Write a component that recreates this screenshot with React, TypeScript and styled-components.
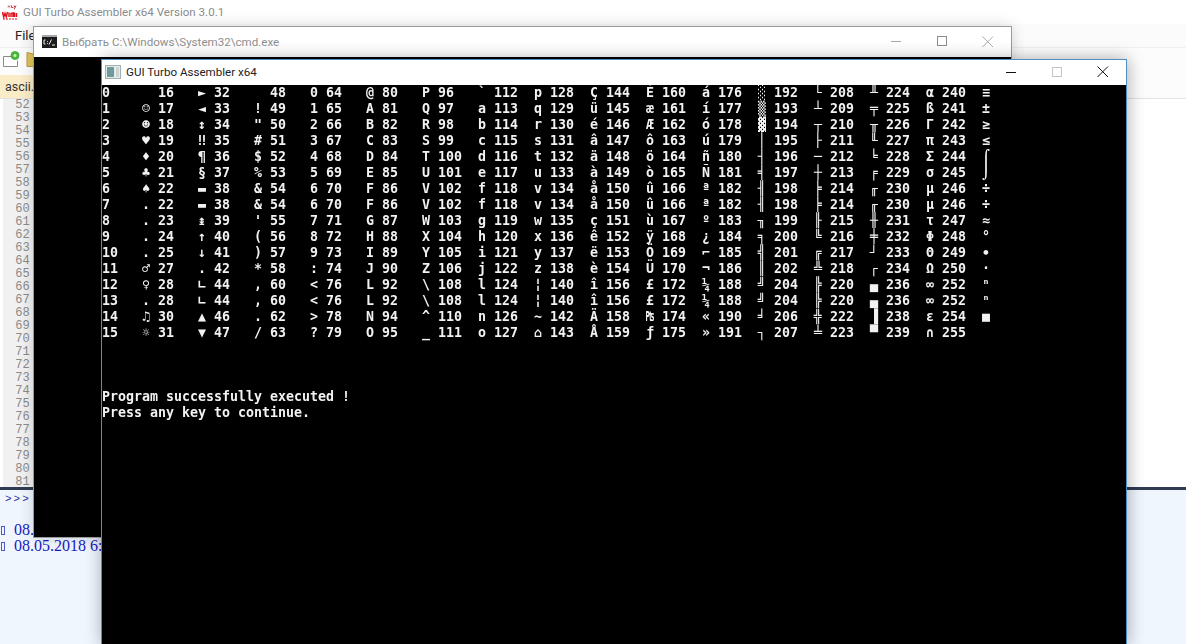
import React from 'react';
import styled, { createGlobalStyle } from 'styled-components';

const GlobalStyle = createGlobalStyle`
  html, body {
    margin: 0;
    padding: 0;
    background: #fff;
  }
  #root {
    width: 1186px;
    height: 644px;
  }
  * {
    box-sizing: border-box;
  }
`;

const uiFont = `Roboto, "Noto Sans", "Liberation Sans", sans-serif`;

// number + the character printed after it, the way the program lays them out
type Pair = [string, string];

const table: Pair[][] = [
  [['0', ' '], ['16', '►'], ['32', ' '], ['48', '0'], ['64', '@'], ['80', 'P'], ['96', '`'], ['112', 'p'], ['128', 'Ç'], ['144', 'É'], ['160', 'á'], ['176', '░'], ['192', '└'], ['208', '╨'], ['224', 'α'], ['240', '≡']],
  [['1', '☺'], ['17', '◄'], ['33', '!'], ['49', '1'], ['65', 'A'], ['81', 'Q'], ['97', 'a'], ['113', 'q'], ['129', 'ü'], ['145', 'æ'], ['161', 'í'], ['177', '▒'], ['193', '┴'], ['209', '╤'], ['225', 'ß'], ['241', '±']],
  [['2', '☻'], ['18', '↕'], ['34', '"'], ['50', '2'], ['66', 'B'], ['82', 'R'], ['98', 'b'], ['114', 'r'], ['130', 'é'], ['146', 'Æ'], ['162', 'ó'], ['178', '▓'], ['194', '┬'], ['210', '╥'], ['226', 'Γ'], ['242', '≥']],
  [['3', '♥'], ['19', '‼'], ['35', '#'], ['51', '3'], ['67', 'C'], ['83', 'S'], ['99', 'c'], ['115', 's'], ['131', 'â'], ['147', 'ô'], ['163', 'ú'], ['179', '│'], ['195', '├'], ['211', '╙'], ['227', 'π'], ['243', '≤']],
  [['4', '♦'], ['20', '¶'], ['36', '$'], ['52', '4'], ['68', 'D'], ['84', 'T'], ['100', 'd'], ['116', 't'], ['132', 'ä'], ['148', 'ö'], ['164', 'ñ'], ['180', '┤'], ['196', '─'], ['212', '╘'], ['228', 'Σ'], ['244', '⌠']],
  [['5', '♣'], ['21', '§'], ['37', '%'], ['53', '5'], ['69', 'E'], ['85', 'U'], ['101', 'e'], ['117', 'u'], ['133', 'à'], ['149', 'ò'], ['165', 'Ñ'], ['181', '╡'], ['197', '┼'], ['213', '╒'], ['229', 'σ'], ['245', '⌡']],
  [['6', '♠'], ['22', '▬'], ['38', '&'], ['54', '6'], ['70', 'F'], ['86', 'V'], ['102', 'f'], ['118', 'v'], ['134', 'å'], ['150', 'û'], ['166', 'ª'], ['182', '╢'], ['198', '╞'], ['214', '╓'], ['230', 'µ'], ['246', '÷']],
  [['7', '.'], ['22', '▬'], ['38', '&'], ['54', '6'], ['70', 'F'], ['86', 'V'], ['102', 'f'], ['118', 'v'], ['134', 'å'], ['150', 'û'], ['166', 'ª'], ['182', '╢'], ['198', '╞'], ['214', '╓'], ['230', 'µ'], ['246', '÷']],
  [['8', '.'], ['23', '↨'], ['39', "'"], ['55', '7'], ['71', 'G'], ['87', 'W'], ['103', 'g'], ['119', 'w'], ['135', 'ç'], ['151', 'ù'], ['167', 'º'], ['183', '╖'], ['199', '╟'], ['215', '╫'], ['231', 'τ'], ['247', '≈']],
  [['9', '.'], ['24', '↑'], ['40', '('], ['56', '8'], ['72', 'H'], ['88', 'X'], ['104', 'h'], ['120', 'x'], ['136', 'ê'], ['152', 'ÿ'], ['168', '¿'], ['184', '╕'], ['200', '╚'], ['216', '╪'], ['232', 'Φ'], ['248', '°']],
  [['10', '.'], ['25', '↓'], ['41', ')'], ['57', '9'], ['73', 'I'], ['89', 'Y'], ['105', 'i'], ['121', 'y'], ['137', 'ë'], ['153', 'Ö'], ['169', '⌐'], ['185', '╣'], ['201', '╔'], ['217', '┘'], ['233', 'Θ'], ['249', '∙']],
  [['11', '♂'], ['27', '.'], ['42', '*'], ['58', ':'], ['74', 'J'], ['90', 'Z'], ['106', 'j'], ['122', 'z'], ['138', 'è'], ['154', 'Ü'], ['170', '¬'], ['186', '║'], ['202', '╩'], ['218', '┌'], ['234', 'Ω'], ['250', '·']],
  [['12', '♀'], ['28', '∟'], ['44', ','], ['60', '<'], ['76', 'L'], ['92', '\\'], ['108', 'l'], ['124', '¦'], ['140', 'î'], ['156', '£'], ['172', '¼'], ['188', '╝'], ['204', '╠'], ['220', '▄'], ['236', '∞'], ['252', 'ⁿ']],
  [['13', '.'], ['28', '∟'], ['44', ','], ['60', '<'], ['76', 'L'], ['92', '\\'], ['108', 'l'], ['124', '¦'], ['140', 'î'], ['156', '£'], ['172', '¼'], ['188', '╝'], ['204', '╠'], ['220', '▄'], ['236', '∞'], ['252', 'ⁿ']],
  [['14', '♫'], ['30', '▲'], ['46', '.'], ['62', '>'], ['78', 'N'], ['94', '^'], ['110', 'n'], ['126', '~'], ['142', 'Ä'], ['158', '₧'], ['174', '«'], ['190', '╛'], ['206', '╬'], ['222', '▐'], ['238', 'ε'], ['254', '■']],
  [['15', '☼'], ['31', '▼'], ['47', '/'], ['63', '?'], ['79', 'O'], ['95', '_'], ['111', 'o'], ['127', '⌂'], ['143', 'Å'], ['159', 'ƒ'], ['175', '»'], ['191', '┐'], ['207', '╧'], ['223', '▀'], ['239', '∩'], ['255', ' ']],
];

const gutterLines = Array.from({ length: 30 }, (_, i) => 52 + i);

const Desktop = styled.div`
  position: relative;
  width: 1186px;
  height: 644px;
  overflow: hidden;
  background: #fff;
`;

/* IDE window in the back */
const Ide = styled.div`
  position: absolute;
  inset: 0;
  display: flex;
  flex-direction: column;
  background: #fff;
  font-family: ${uiFont};
`;

const IdeTitle = styled.div`
  display: flex;
  align-items: center;
  gap: 5px;
  height: 24px;
  padding-left: 2px;
  flex: none;
  font-size: 11.6px;
  color: #8b8b8b;
`;

const IdeMenu = styled.div`
  height: 24px;
  padding: 3px 0 0 15px;
  flex: none;
  font-size: 13px;
  line-height: 17px;
  color: #222;
  background: #fbfbfb;
  border-bottom: 1px solid #f0f0f0;
`;

const IdeToolbar = styled.div`
  display: flex;
  align-items: center;
  gap: 6px;
  height: 27px;
  padding: 0 0 4px 3px;
  flex: none;
  background: #fcfcfc;
`;

const IdeTabs = styled.div`
  height: 24px;
  flex: none;
  background: #fcfcfc;
  border-bottom: 1px solid #e2e2e2;
`;

const IdeTab = styled.div`
  width: 60px;
  height: 23px;
  padding-left: 5px;
  font-size: 12.5px;
  line-height: 23px;
  color: #333;
  background: #fbecc8;
`;

const Editor = styled.div`
  flex: none;
  height: 388px;
  overflow: hidden;
  background: #fff;
`;

const Gutter = styled.div`
  width: 33px;
  height: 100%;
  padding-right: 3px;
  background: #f1f1f1;
  border-left: 3px solid #fff;
  font-family: "Liberation Mono", monospace;
  font-size: 12px;
  letter-spacing: 0.2px;
  line-height: 13px;
  color: #8a8a8a;
  text-align: right;
`;

const Shell = styled.div`
  flex: 1;
  padding: 1px 0 0 1px;
  background: #eff6fe;
  border-top: 3px solid #2e3b52;
  color: #1a1ab8;
`;

const Prompt = styled.div`
  height: 31px;
  padding-left: 4px;
  font-family: "Liberation Mono", monospace;
  font-size: 11px;
  letter-spacing: 2px;
  line-height: 16px;
  color: #2a2aa0;
`;

const LogLine = styled.div`
  display: flex;
  align-items: center;
  gap: 9px;
  height: 16px;
  font-family: "Liberation Serif", serif;
  font-size: 16px;
  white-space: pre;
  color: #1a1ac0;
`;

const LogMark = styled.span`
  width: 4px;
  height: 9px;
  flex: none;
  border: 1px solid #5555cc;
`;

/* the two console windows */
const Win = styled.div<{ $left: number; $top: number; $width: number; $height: number; $active?: boolean }>`
  position: absolute;
  left: ${p => p.$left}px;
  top: ${p => p.$top}px;
  width: ${p => p.$width}px;
  height: ${p => p.$height}px;
  display: flex;
  flex-direction: column;
  background: #000;
  border: 1px solid ${p => (p.$active ? '#4f8fc8' : '#9a9a9a')};
  box-shadow: ${p => (p.$active ? '1px 0 16px rgba(0, 0, 0, 0.32)' : '0 0 14px rgba(0, 0, 0, 0.16)')};
`;

const TitleBar = styled.div<{ $height: number; $lift?: number }>`
  display: flex;
  align-items: center;
  flex: none;
  height: ${p => p.$height}px;
  padding-bottom: ${p => p.$lift ?? 0}px;
  background: #fff;
`;

const TitleIcon = styled.div<{ $inset: number }>`
  margin: 0 5px 0 ${p => p.$inset}px;
  flex: none;
  line-height: 0;
`;

const TitleText = styled.div<{ $active?: boolean }>`
  flex: 1;
  font-family: ${uiFont};
  font-size: 11.6px;
  white-space: nowrap;
  color: ${p => (p.$active ? '#222' : '#8f8f8f')};
`;

const Buttons = styled.div`
  display: flex;
  flex: none;
  height: 100%;
`;

const CtrlButton = styled.div`
  display: flex;
  align-items: center;
  justify-content: center;
  width: 46px;
  height: 100%;
  line-height: 0;
`;

const Console = styled.div`
  flex: 1;
  overflow: hidden;
  color: #f2f2f2;
  font-family: "DejaVu Sans Mono", "Liberation Mono", monospace;
  font-size: 13.29px;
  font-weight: 700;
  line-height: 16px;
  white-space: pre;
  will-change: transform;
`;

const Row = styled.div`
  display: grid;
  grid-template-columns: repeat(16, 56px);
  height: 16px;
`;

const Cell = styled.div`
  display: grid;
  grid-template-columns: 40px 8px;
`;

const Gap = styled.div<{ $rows: number }>`
  height: ${p => p.$rows * 16}px;
`;

const MessageLine = styled.div`
  height: 16px;
`;

const WinButtons = ({ color, faint }: { color: string; faint: string }) => (
  <Buttons>
    <CtrlButton>
      <svg width="11" height="11" viewBox="0 0 11 11"><path d="M0 5.5h10" stroke={color} strokeWidth="1" /></svg>
    </CtrlButton>
    <CtrlButton>
      <svg width="11" height="11" viewBox="0 0 11 11"><rect x=".5" y=".5" width="9" height="9" fill="none" stroke={faint} strokeWidth="1" /></svg>
    </CtrlButton>
    <CtrlButton>
      <svg width="12" height="12" viewBox="0 0 12 12"><path d="M.5.5l10.5 10.5M11 .5L.5 11" stroke={color} strokeWidth="1" /></svg>
    </CtrlButton>
  </Buttons>
);

export default function App() {
  return (
    <Desktop>
      <GlobalStyle />

      <Ide>
        <IdeTitle>
          <svg width="16" height="16" viewBox="0 0 16 16">
            <path d="M6 1.5l2 2M8 1.5l-2 2M9.500 1.500v2h2M12 1.500l1 2 1-2M13 3.500l-1 2" stroke="#b8343a" strokeWidth=".9" fill="none" />
            <path d="M.5 8l1.200 5 1.300-3.500L4.300 13l1.200-5M7 8.500v4.500M9 9v4l0-3.500 2-.5v4M12.500 8.500v4.500M14.500 9v4" stroke="#e0141c" strokeWidth="1.500" fill="none" />
            <path d="M1 15h14" stroke="#e0141c" strokeWidth="1" strokeDasharray="2 1" />
          </svg>
          GUI Turbo Assembler x64 Version 3.0.1
        </IdeTitle>
        <IdeMenu>File</IdeMenu>
        <IdeToolbar>
          <svg width="17" height="17" viewBox="0 0 17 17">
            <path d="M.5 5.500h9v-1M.5 5.500v10h14v-6" fill="#fff" stroke="#8a8a8a" />
            <circle cx="12" cy="4.500" r="4" fill="#4cbb3c" stroke="#2f9a2a" strokeWidth=".7" />
            <circle cx="12" cy="4.500" r="1.500" fill="#c8f0c0" />
          </svg>
          <svg width="12" height="17" viewBox="0 0 12 17">
            <path d="M1 1.500l6 1.500v1h5v11.500H1z" fill="#e2c260" stroke="#b59a35" />
          </svg>
        </IdeToolbar>
        <IdeTabs>
          <IdeTab>ascii.asm</IdeTab>
        </IdeTabs>
        <Editor>
          <Gutter>
            {gutterLines.map(n => (
              <div key={n}>{n}</div>
            ))}
          </Gutter>
        </Editor>
        <Shell>
          <Prompt>&gt;&gt;&gt;</Prompt>
          <LogLine><LogMark />08.05.2018 6:12:41</LogLine>
          <LogLine><LogMark />08.05.2018 6:12:43</LogLine>
        </Shell>
      </Ide>

      <Win $left={33} $top={26} $width={979} $height={512}>
        <TitleBar $height={30} $lift={1}>
          <TitleIcon $inset={8}>
            <svg width="15" height="13" viewBox="0 0 15 13">
              <rect width="15" height="13" fill="#1c1c1c" />
              <rect width="15" height="2" fill="#a8a8a8" />
              <path d="M3.500 5H2v4h1.500M5.500 6v.8M5.500 8.200V9M7 9.500l2.500-5M10 10h3" stroke="#eee" strokeWidth="1" fill="none" />
            </svg>
          </TitleIcon>
          <TitleText>Выбрать C:\Windows\System32\cmd.exe</TitleText>
          <WinButtons color="#a8a8a8" faint="#8c8c8c" />
        </TitleBar>
      </Win>

      <Win $left={101} $top={59} $width={1026} $height={586} $active>
        <TitleBar $height={25} $lift={1}>
          <TitleIcon $inset={3}>
            <svg width="16" height="14" viewBox="0 0 16 14">
              <rect x=".5" y=".5" width="15" height="13" fill="#e6ecec" stroke="#a5aeae" />
              <rect x="2" y="2" width="7" height="10" fill="#6f9a9a" />
              <rect x="11" y="2" width="3" height="10" fill="#c9d6d6" />
            </svg>
          </TitleIcon>
          <TitleText $active>GUI Turbo Assembler x64</TitleText>
          <WinButtons color="#111" faint="#c4c4c4" />
        </TitleBar>
        <Console>
          {table.map(pairs => (
            <Row key={pairs[0][0]}>
              {pairs.map(([num, glyph], i) => (
                <Cell key={i}>
                  <span>{num}</span>
                  <span>{glyph}</span>
                </Cell>
              ))}
            </Row>
          ))}
          <Gap $rows={3} />
          <MessageLine>Program successfully executed !</MessageLine>
          <MessageLine>Press any key to continue.</MessageLine>
        </Console>
      </Win>
    </Desktop>
  );
}
